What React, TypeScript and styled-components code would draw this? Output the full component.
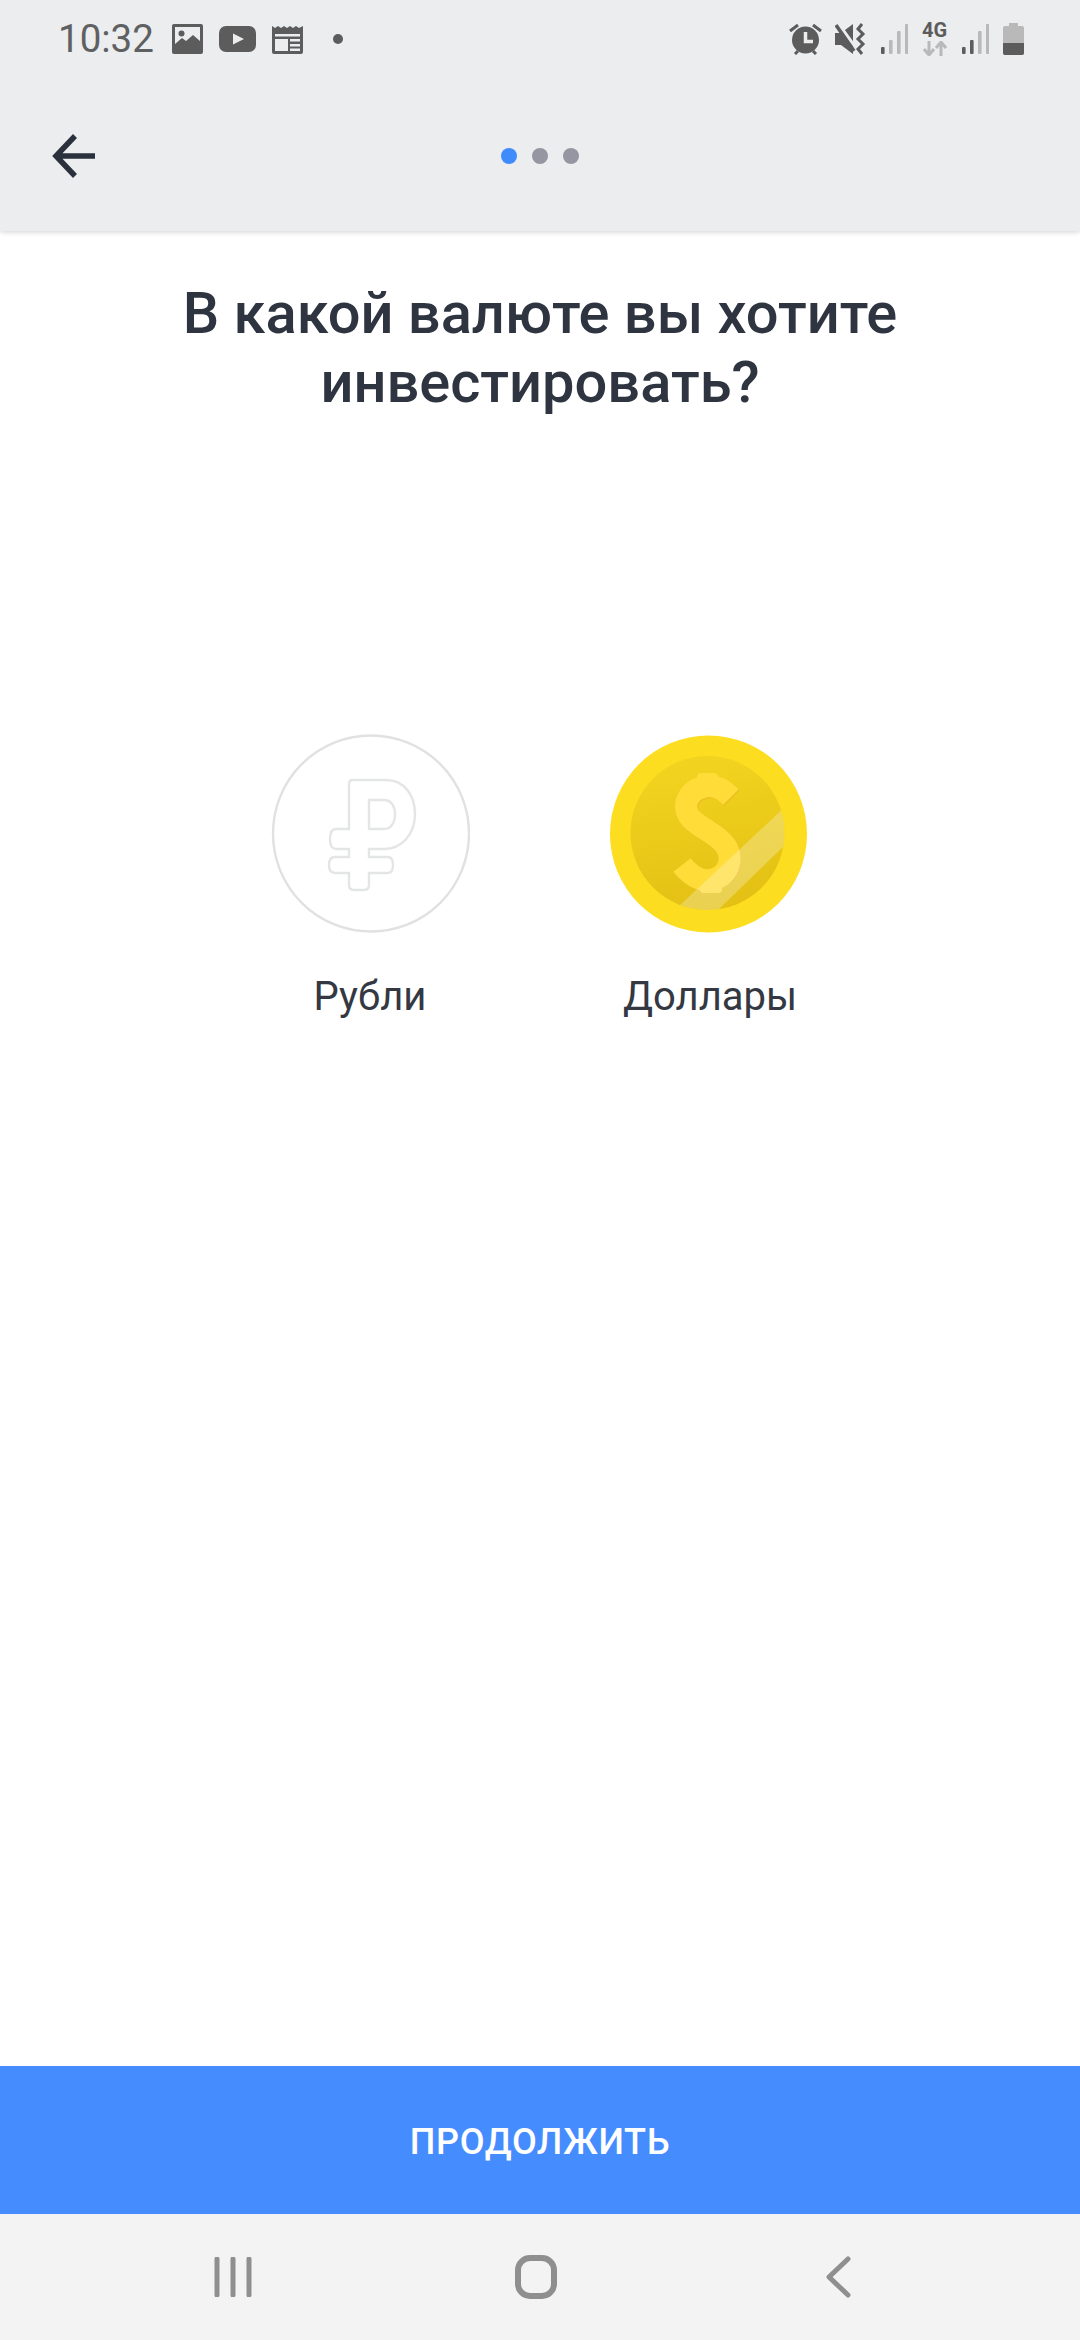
import React from 'react';
import styled, { createGlobalStyle } from 'styled-components';

const Global = createGlobalStyle`
    html, body {
        margin: 0;
        padding: 0;
        background: #fff;
    }
    body {
        font-family: Roboto, "Liberation Sans", sans-serif;
    }
`;

const Page = styled.div`
    width: 1080px;
    height: 2340px;
    display: flex;
    flex-direction: column;
    overflow: hidden;
`;

const Header = styled.header`
    height: 231px;
    flex: none;
    background: #ebedef;
    box-shadow: 0 1px 5px rgba(40, 50, 60, 0.22);
    position: relative;
    z-index: 1;
`;

const StatusBar = styled.div`
    height: 78px;
    display: flex;
    align-items: center;
    justify-content: space-between;
    padding: 0 56px 0 58px;
    box-sizing: border-box;
`;

const StatusGroup = styled.div`
    display: flex;
    align-items: center;
`;

const Time = styled.span`
    font-size: 38.5px;
    line-height: 44px;
    color: #5f6062;
    margin-right: 18px;
`;

const StatusIcon = styled.svg<{ $left?: number }>`
    display: block;
    flex: none;
    margin-left: ${(p) => p.$left || 0}px;
`;

const Network = styled.div`
    width: 25px;
    margin-left: 14px;
    display: flex;
    flex-direction: column;
    align-items: center;
    gap: 3px;
`;

const NetworkLabel = styled.span`
    font-size: 20px;
    line-height: 15px;
    font-weight: 700;
    color: #5c5c5c;
`;

const Toolbar = styled.div`
    height: 150px;
    display: grid;
    grid-template-columns: 1fr auto 1fr;
    align-items: center;
    padding: 3px 0 0 50px;
`;

const BackButton = styled.button`
    width: 50px;
    height: 50px;
    padding: 0;
    border: 0;
    background: none;
    justify-self: start;
`;

const Dots = styled.div`
    display: flex;
    gap: 15px;
    margin-left: -50px;
`;

const Dot = styled.span<{ $active?: boolean }>`
    width: 16px;
    height: 16px;
    border-radius: 50%;
    background: ${(p) => (p.$active ? '#3f8bfb' : '#9497a1')};
`;

const Main = styled.main`
    flex: 1;
    background: #fff;
    padding-top: 48px;
`;

const Title = styled.h1`
    margin: 0;
    font-size: 57.8px;
    line-height: 69px;
    font-weight: 500;
    text-align: center;
    color: #2e3440;
`;

const Options = styled.div`
    display: flex;
    justify-content: center;
    gap: 140px;
    margin-top: 317px;
`;

const Option = styled.div`
    width: 200px;
    display: flex;
    flex-direction: column;
    align-items: center;
`;

const OptionLabel = styled.span`
    margin-top: 42px;
    font-size: 40px;
    line-height: 42px;
    color: #333842;
    white-space: nowrap;
`;

const ContinueButton = styled.button`
    height: 148px;
    flex: none;
    border: 0;
    background: #458cff;
    color: #fff;
    font-family: Roboto, "Liberation Sans", sans-serif;
    font-size: 36px;
    font-weight: 500;
    letter-spacing: 0.7px;
    padding: 4px 0 0;
`;

const NavBar = styled.nav`
    height: 126px;
    flex: none;
    background: #f3f3f3;
    display: grid;
    grid-template-columns: 1fr 1fr 1fr;
    align-items: center;
    justify-items: center;
`;

const NavIcon = styled.svg<{ $shift?: number }>`
    display: block;
    transform: translateX(${(p) => p.$shift || 0}px);
`;

const grey = '#5c5c5c';
const light = '#b9b9b9';
const gold = '#ffdc38';

const sPath =
    'M141 87 C133 79 123 74 113 77 C98 81 92 95 99 106 C106 117 125 122 135 135 C145 148 138 168 120 170 C110 171 100 165 92 155';

const SignalIcon = ({ bars }: { bars: number }) => (
    <StatusIcon width="27" height="32" viewBox="0 0 27 32" $left={15}>
        {[0, 1, 2, 3].map((i) => {
            const h = [7, 14, 23, 30][i];
            return <rect key={i} x={i * 8} y={31 - h} width="3.6" height={h} rx="1" fill={i < bars ? grey : light} />;
        })}
    </StatusIcon>
);

const RubleCoin = () => (
    <svg width="200" height="200" viewBox="20 24 200 200">
        <circle cx="121" cy="123.5" r="98" fill="#fff" stroke="#e0e1e1" strokeWidth="2.4" />
        <path
            d="M103 70 H136 C154 70 165 85 165 104 C165 124 152 139 134 139 H119 V147 H138 Q143 147 143 155 Q143 163 138 163 H119 V175 Q119 180 114 180 H104 Q99 180 99 175 V163 H85 Q79 163 79 155 Q79 147 85 147 H99 V139 H86 Q80 139 80 129 Q80 119 86 119 H99 V74 Q99 70 103 70 Z M119 90 H134 C141 90 145 96 145 104 C145 113 141 119 134 119 H119 Z"
            fill="none"
            stroke="#e4e5e5"
            strokeWidth="2.4"
        />
    </svg>
);

const DollarCoin = () => (
    <svg width="200" height="200" viewBox="20 24 200 200">
        <defs>
            <linearGradient id="coinFace" x1="0.4" y1="0" x2="0.6" y2="1">
                <stop offset="0" stopColor="#f2d420" />
                <stop offset="1" stopColor="#e3c014" />
            </linearGradient>
            <clipPath id="coinClip">
                <circle cx="117.5" cy="123" r="77" />
            </clipPath>
        </defs>
        <circle cx="118.5" cy="124" r="98.5" fill="#fddd20" />
        <circle cx="117.5" cy="123" r="77" fill="url(#coinFace)" />
        <g fill="none" strokeWidth="22">
            <path d={sPath} stroke="#ecbd22" transform="translate(1 1)" />
            <path d={sPath} stroke={gold} />
        </g>
        <rect x="107" y="63" width="21" height="18" rx="4" fill={gold} />
        <rect x="110" y="165" width="22" height="18" rx="4" fill={gold} />
        <g clipPath="url(#coinClip)">
            <polygon points="88,197 125,203 197,133 197,95" fill="#fff" opacity="0.26" />
        </g>
    </svg>
);

export default function App() {
    return (
        <Page>
            <Global />
            <Header>
                <StatusBar>
                    <StatusGroup>
                        <Time>10:32</Time>
                        <StatusIcon width="31" height="30" viewBox="0 0 31 30">
                            <rect width="31" height="30" rx="2" fill={grey} />
                            <rect x="3" y="3" width="25" height="17" fill="#ebedef" />
                            <circle cx="9.5" cy="9.5" r="3" fill={grey} />
                            <path d="M3 20 L10 14 L14 17 L21 11 L28 17 V21 H3 Z" fill={grey} />
                        </StatusIcon>
                        <StatusIcon width="37" height="26" viewBox="0 0 37 26" $left={16}>
                            <rect width="37" height="26" rx="7" fill={grey} />
                            <path d="M14 7.5 L25 13 L14 18.5 Z" fill="#ebedef" />
                        </StatusIcon>
                        <StatusIcon width="31" height="29" viewBox="0 0 31 29" $left={16}>
                            <path d="M0 1 L3 3 L6 1 L9 3 L12 1 L15 3 L18 1 L21 3 L24 1 L27 3 L31 1 V27 Q31 29 29 29 H2 Q0 29 0 27 Z" fill={grey} />
                            <rect x="3" y="9" width="25" height="2.5" fill="#ebedef" />
                            <rect x="3" y="14" width="13" height="12" fill="#ebedef" />
                            <rect x="18" y="14" width="10" height="2.5" fill="#ebedef" />
                            <rect x="18" y="19" width="10" height="2.5" fill="#ebedef" />
                            <rect x="18" y="23.5" width="10" height="2.5" fill="#ebedef" />
                        </StatusIcon>
                        <StatusIcon width="10" height="10" viewBox="0 0 10 10" $left={30}>
                            <circle cx="5" cy="5" r="5" fill={grey} />
                        </StatusIcon>
                    </StatusGroup>
                    <StatusGroup>
                        <StatusIcon width="33" height="32" viewBox="0 0 33 32">
                            <circle cx="16.5" cy="17" r="13.5" fill={grey} />
                            <path d="M16.5 9 V18.5 H24" fill="none" stroke="#ebedef" strokeWidth="3.5" />
                            <path d="M1 8 L9 2 M32 8 L24 2 M6 31 L9 28 M27 31 L24 28" stroke={grey} strokeWidth="3" />
                        </StatusIcon>
                        <StatusIcon width="31" height="32" viewBox="0 0 31 32" $left={13}>
                            <path d="M0 10 H6 L18 1 V31 L6 22 H0 Z" fill={grey} />
                            <path d="M3 0 L21 25" stroke="#ebedef" strokeWidth="3" />
                            <path d="M1 2 L19 28" stroke={grey} strokeWidth="3.5" />
                            <path d="M27 1 L23 6 L28 11 L23 16 L28 21 L23 26 L27 31" fill="none" stroke={grey} strokeWidth="3" />
                        </StatusIcon>
                        <SignalIcon bars={1} />
                        <Network>
                            <NetworkLabel>4G</NetworkLabel>
                            <svg width="24" height="15" viewBox="0 0 24 15">
                                <path d="M6 0 V14 M1 8 L6 14 L11 8" fill="none" stroke={light} strokeWidth="3" />
                                <path d="M18 15 V1 M13 7 L18 1 L23 7" fill="none" stroke={light} strokeWidth="3" />
                            </svg>
                        </Network>
                        <SignalIcon bars={2} />
                        <StatusIcon width="21" height="32" viewBox="0 0 21 32" $left={14}>
                            <path d="M6 0 H15 V3 H19 Q21 3 21 5 V30 Q21 32 19 32 H2 Q0 32 0 30 V5 Q0 3 2 3 H6 Z" fill={light} />
                            <path d="M0 20 H21 V30 Q21 32 19 32 H2 Q0 32 0 30 Z" fill={grey} />
                        </StatusIcon>
                    </StatusGroup>
                </StatusBar>
                <Toolbar>
                    <BackButton>
                        <svg width="50" height="50" viewBox="0 0 50 50">
                            <path d="M45 25 H7 M25 5 L6 25 L25 45" fill="none" stroke="#2a303c" strokeWidth="5.5" />
                        </svg>
                    </BackButton>
                    <Dots>
                        <Dot $active />
                        <Dot />
                        <Dot />
                    </Dots>
                </Toolbar>
            </Header>
            <Main>
                <Title>
                    В какой валюте вы хотите
                    <br />
                    инвестировать?
                </Title>
                <Options>
                    <Option>
                        <RubleCoin />
                        <OptionLabel>Рубли</OptionLabel>
                    </Option>
                    <Option>
                        <DollarCoin />
                        <OptionLabel>Доллары</OptionLabel>
                    </Option>
                </Options>
            </Main>
            <ContinueButton>ПРОДОЛЖИТЬ</ContinueButton>
            <NavBar>
                <NavIcon width="40" height="40" viewBox="0 0 40 40" $shift={54}>
                    <path d="M3 2 V38 M19 2 V38 M35 2 V38" stroke="#8f8f8f" strokeWidth="5" strokeLinecap="round" />
                </NavIcon>
                <NavIcon width="42" height="44" viewBox="0 0 42 44" $shift={-4}>
                    <rect x="3" y="3" width="36" height="38" rx="12" fill="none" stroke="#8f8f8f" strokeWidth="6" />
                </NavIcon>
                <NavIcon width="28" height="42" viewBox="0 0 28 42" $shift={-62}>
                    <path d="M24 3 L5 21 L24 39" fill="none" stroke="#8f8f8f" strokeWidth="5" strokeLinecap="round" strokeLinejoin="round" />
                </NavIcon>
            </NavBar>
        </Page>
    );
}
